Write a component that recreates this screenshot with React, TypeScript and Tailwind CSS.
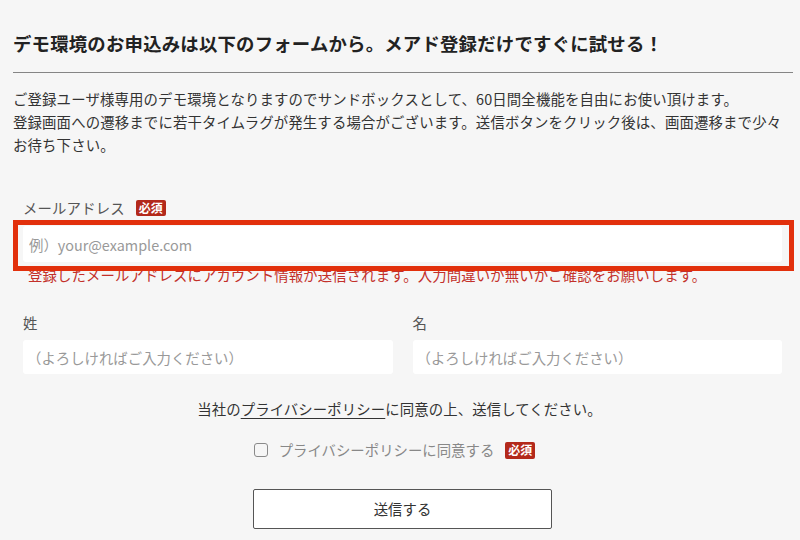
export default function App() {
  return (
    <div
      className="w-[800px] h-[540px] overflow-hidden bg-[#f6f6f6] text-[#333]"
      style={{ fontFamily: '"Noto Sans CJK JP", "Noto Sans", sans-serif' }}
    >
      <div className="pl-[13px] pr-[7px] pt-[30px]">
        <h1 className="text-[18.4px] leading-[26px] font-bold tracking-[0.2px] text-[#222]">
          デモ環境のお申込みは以下のフォームから。メアド登録だけですぐに試せる！
        </h1>
        <div className="mt-[16px] h-px bg-[#858585]" />
        <p className="mt-[14px] text-[14.4px] leading-[23px] tracking-[0.15px] text-[#333]">
          ご登録ユーザ様専用のデモ環境となりますのでサンドボックスとして、60日間全機能を自由にお使い頂けます。
          <br />
          登録画面への遷移までに若干タイムラグが発生する場合がございます。送信ボタンをクリック後は、画面遷移まで少々
          <br />
          お待ち下さい。
        </p>
      </div>

      <form className="pl-[23px] pr-[18px]">
        <div className="mt-[42px] flex h-[20px] items-center gap-[11px]">
          <label className="text-[14.4px] leading-[20px] tracking-[0.15px] text-[#555]">メールアドレス</label>
          <span className="flex h-[16px] items-center rounded-[2px] bg-[#b3291b] px-[3px] text-[12px] font-bold leading-none text-white">
            必須
          </span>
        </div>

        <div className="relative mt-[8px]">
          <input
            type="email"
            placeholder="例）your@example.com"
            className="block h-[36px] w-full rounded-[3px] bg-white pl-[6px] text-[14.4px] text-[#333] outline-none placeholder:text-[#999]"
          />
          <div className="pointer-events-none absolute -top-[6px] -left-[10px] -right-[12px] -bottom-[9px] z-10 border-[5px] border-[#e2300c]" />
        </div>
        <p className="mt-[3px] pl-[5px] text-[14.4px] leading-[20px] tracking-[0.1px] text-[#c3302a]">
          登録したメールアドレスにアカウント情報が送信されます。入力間違いが無いかご確認をお願いします。
        </p>

        <div className="mt-[28px] grid grid-cols-2 gap-x-[20px]">
          <div>
            <label className="block text-[14.4px] leading-[20px] text-[#555]">姓</label>
            <input
              type="text"
              placeholder="（よろしければご入力ください）"
              className="mt-[7px] block h-[34px] w-full rounded-[3px] bg-white pl-[4px] text-[14.4px] text-[#333] outline-none placeholder:text-[#999]"
            />
          </div>
          <div>
            <label className="block text-[14.4px] leading-[20px] text-[#555]">名</label>
            <input
              type="text"
              placeholder="（よろしければご入力ください）"
              className="mt-[7px] block h-[34px] w-full rounded-[3px] bg-white pl-[4px] text-[14.4px] text-[#333] outline-none placeholder:text-[#999]"
            />
          </div>
        </div>

        <p className="mt-[25px] pr-[6px] text-center text-[14.4px] leading-[20px] tracking-[0.1px] text-[#333]">
          当社の<a href="#" className="underline underline-offset-[3px]">プライバシーポリシー</a>に同意の上、送信してください。
        </p>

        <div className="mt-[21px] flex h-[20px] items-center justify-center pr-[16px]">
          <label className="flex items-center">
            <input
              type="checkbox"
              className="h-[14px] w-[14px] appearance-none rounded-[3px] border border-[#8a8a8a] bg-[#f6f6f6]"
            />
            <span className="ml-[11px] text-[14.4px] leading-[20px] text-[#888]">プライバシーポリシーに同意する</span>
          </label>
          <span className="ml-[11px] flex h-[17px] items-center rounded-[2px] bg-[#b3291b] px-[3px] text-[12px] font-bold leading-none text-white">
            必須
          </span>
        </div>

        <div className="mt-[29px] flex justify-center">
          <button
            type="button"
            className="h-[40px] w-[299px] rounded-[2px] border border-[#555] bg-white text-[14.4px] text-[#333]"
          >
            送信する
          </button>
        </div>
      </form>
    </div>
  );
}
